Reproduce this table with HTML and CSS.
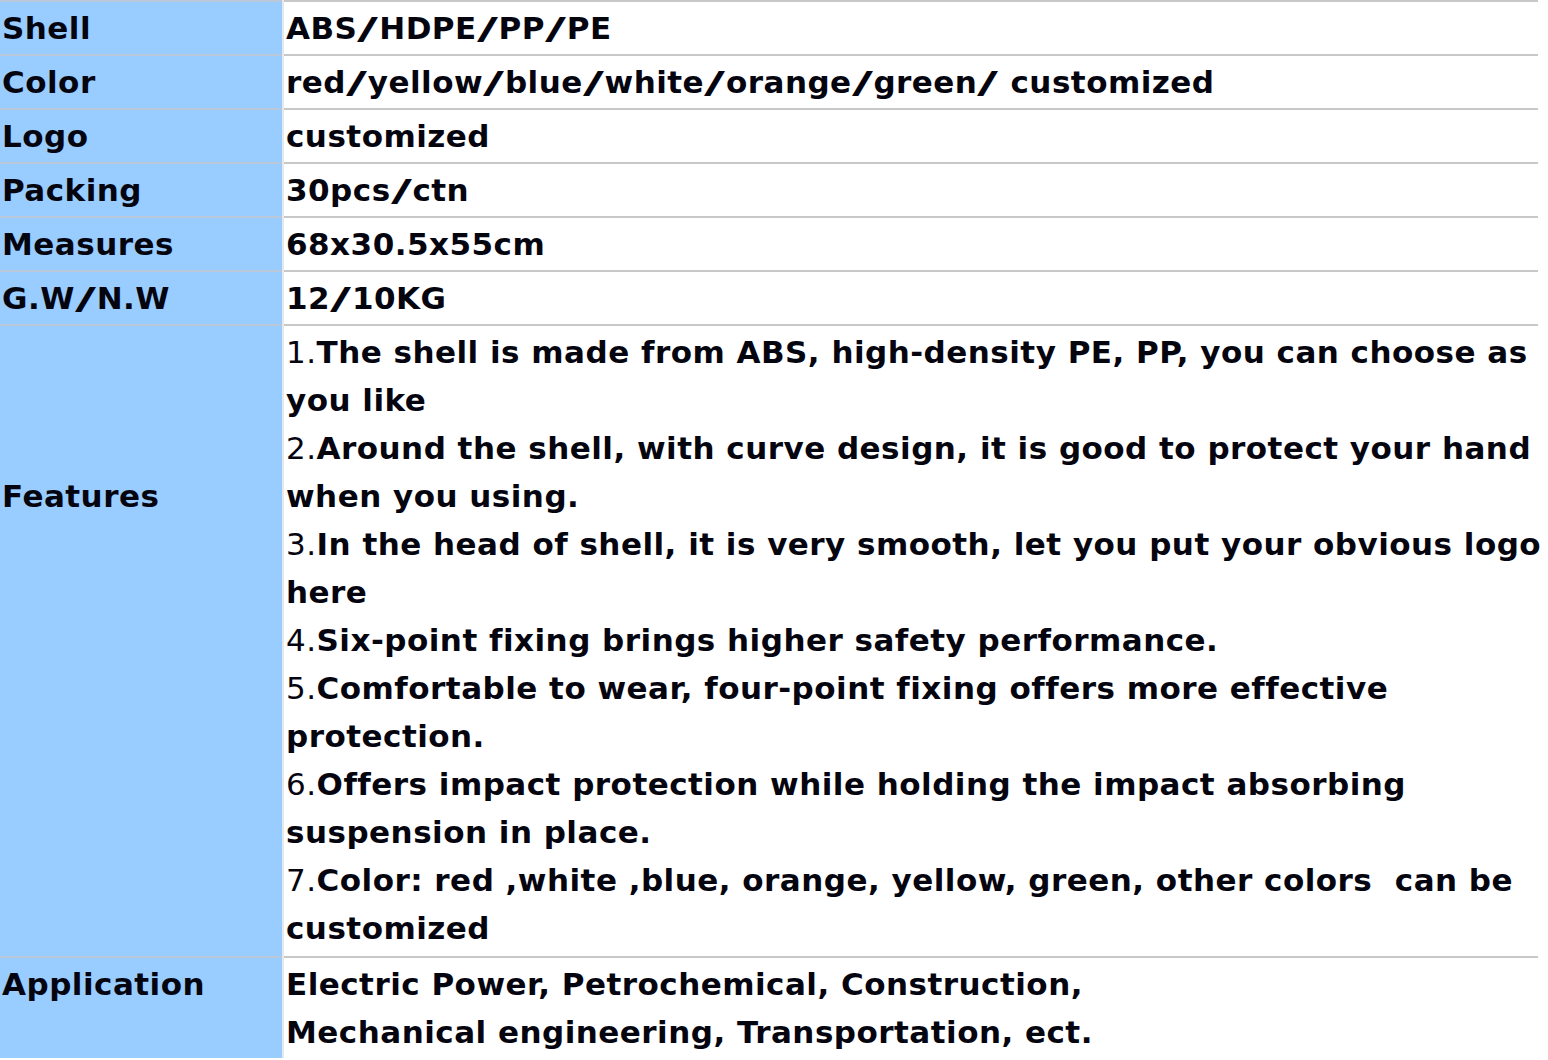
FILE: index.html
```html
<!DOCTYPE html>
<html lang="en">
<head>
<meta charset="utf-8">
<title>Product specification</title>
<link rel="stylesheet" href="styles.css">
</head>
<body>
<div class="spec">
  <div class="row">
    <div class="label">Shell</div>
    <div class="value">ABS<span class="sl">/</span>HDPE<span class="sl">/</span>PP<span class="sl">/</span>PE</div>
  </div>
  <div class="row">
    <div class="label">Color</div>
    <div class="value">red<span class="sl">/</span>yellow<span class="sl">/</span>blue<span class="sl">/</span>white<span class="sl">/</span>orange<span class="sl">/</span>green<span class="sl">/</span> customized</div>
  </div>
  <div class="row">
    <div class="label">Logo</div>
    <div class="value">customized</div>
  </div>
  <div class="row">
    <div class="label">Packing</div>
    <div class="value">30pcs<span class="sl">/</span>ctn</div>
  </div>
  <div class="row">
    <div class="label">Measures</div>
    <div class="value">68x30.5x55cm</div>
  </div>
  <div class="row">
    <div class="label">G.W<span class="sl">/</span>N.W</div>
    <div class="value">12<span class="sl">/</span>10KG</div>
  </div>
  <div class="row row-features">
    <div class="label label-features">Features</div>
    <div class="value">
      <span class="line"><span class="num">1.</span>The shell is made from ABS, high-density PE, PP, you can choose as</span>
      <span class="line">you like</span>
      <span class="line"><span class="num">2.</span>Around the shell, with curve design, it is good to protect your hand</span>
      <span class="line">when you using.</span>
      <span class="line"><span class="num">3.</span>In the head of shell, it is very smooth, let you put your obvious logo</span>
      <span class="line">here</span>
      <span class="line"><span class="num">4.</span>Six-point fixing brings higher safety performance.</span>
      <span class="line"><span class="num">5.</span>Comfortable to wear, four-point fixing offers more effective</span>
      <span class="line">protection.</span>
      <span class="line"><span class="num">6.</span>Offers impact protection while holding the impact absorbing</span>
      <span class="line">suspension in place.</span>
      <span class="line"><span class="num">7.</span>Color: red ,white ,blue, orange, yellow, green, other colors&nbsp; can be</span>
      <span class="line">customized</span>
    </div>
  </div>
  <div class="row">
    <div class="label">Application</div>
    <div class="value">
      <span class="line">Electric Power, Petrochemical, Construction,</span>
      <span class="line">Mechanical engineering, Transportation, ect.</span>
    </div>
  </div>
</div>
</body>
</html>
```
FILE: styles.css
```css
html, body {
  margin: 0;
  padding: 0;
  background: #ffffff;
}

body {
  font-family: "DejaVu Sans", Verdana, sans-serif;
  font-weight: bold;
  font-size: 31px;
  line-height: 48px;
  letter-spacing: 0.48px;
  color: #050510;
}

.spec {
  width: 1538px;
  display: flex;
  flex-direction: column;
}

.row {
  display: grid;
  grid-template-columns: 282px 1254px;
  column-gap: 2px;
  background: #e4e9ee;
}

.label {
  background: #99ccff;
  border-top: 2px solid #b9c9d9;
  padding: 2px 3px 2px 2px;
  white-space: nowrap;
}

.value {
  background: #ffffff;
  border-top: 2px solid #c8c8c8;
  padding: 2px 3px 2px 2px;
  white-space: nowrap;
}

.sl {
  display: inline-block;
  margin: 0 5px;
  transform: scaleX(1.85);
}

.row-features .value {
  padding-bottom: 4px;
}

.label-features {
  padding-top: 146px;
}

.line {
  display: block;
}

.num {
  font-weight: normal;
}
```
